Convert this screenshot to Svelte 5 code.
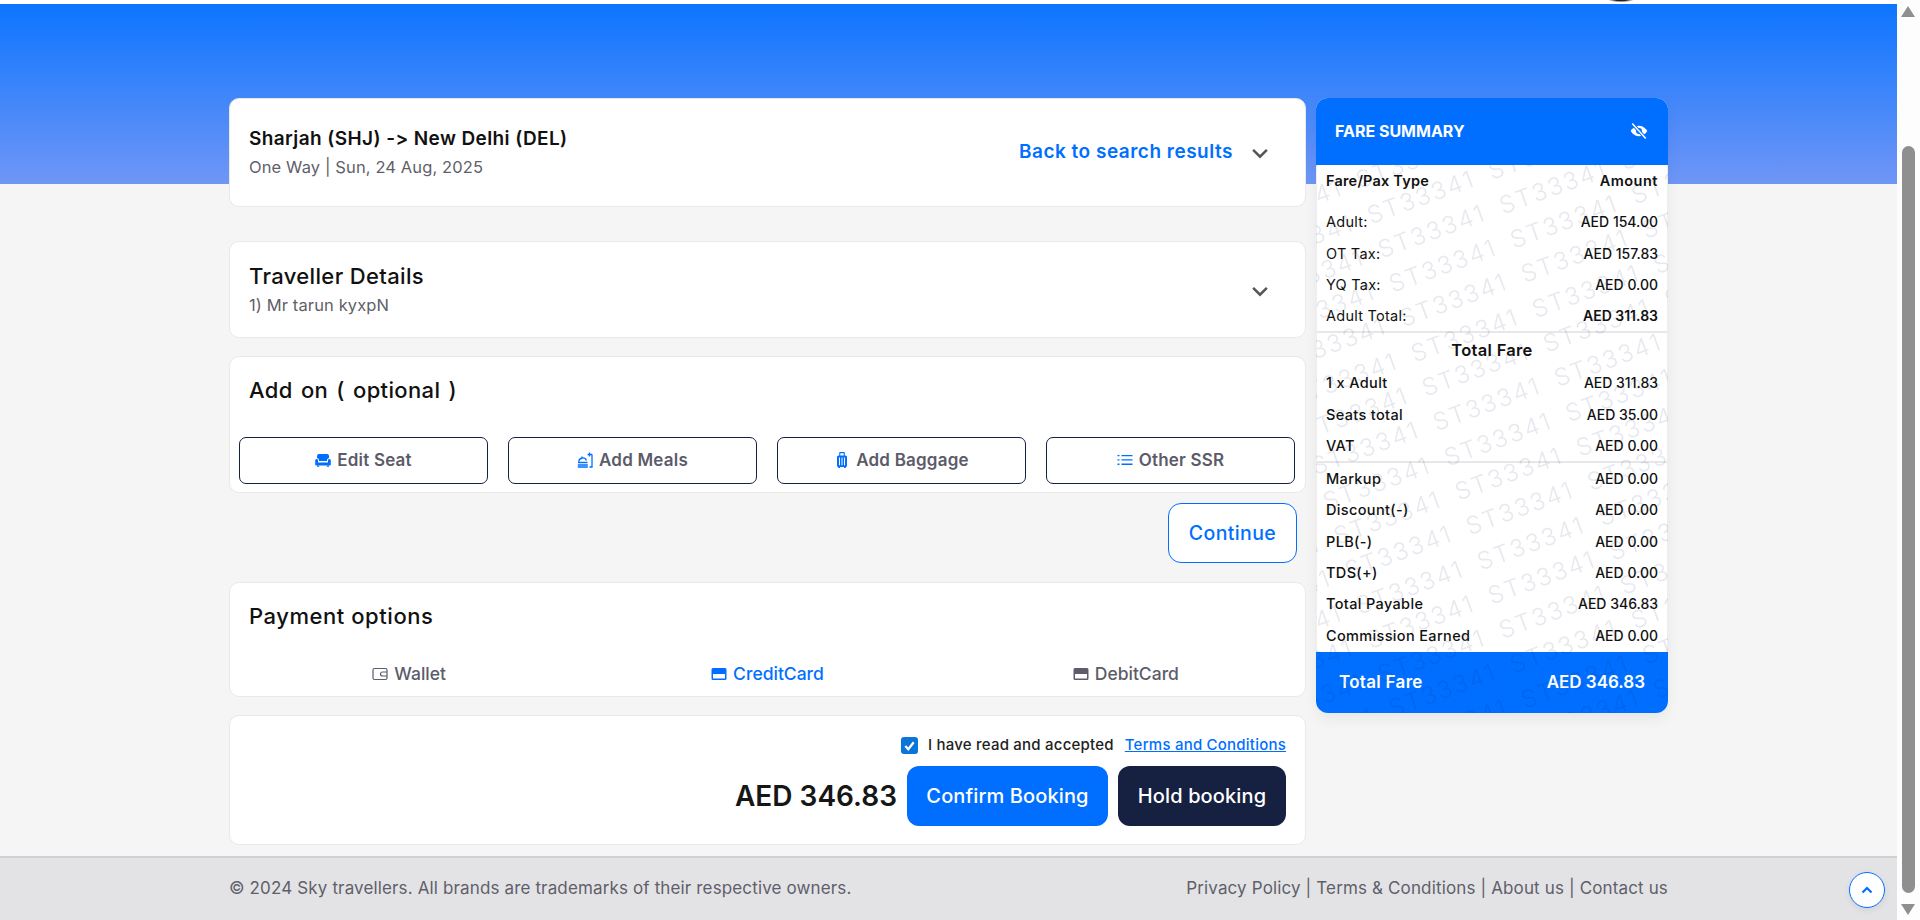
<script lang="ts">
	const addons = [
		{ label: 'Edit Seat', icon: 'seat' },
		{ label: 'Add Meals', icon: 'meals' },
		{ label: 'Add Baggage', icon: 'bag' },
		{ label: 'Other SSR', icon: 'list' }
	];
	const baseRows = [
		{ k: 'Adult:', v: 'AED 154.00' },
		{ k: 'OT Tax:', v: 'AED 157.83' },
		{ k: 'YQ Tax:', v: 'AED 0.00' },
		{ k: 'Adult Total:', v: 'AED 311.83', bold: true }
	];
	const totalRows = [
		{ k: '1 x Adult', v: 'AED 311.83' },
		{ k: 'Seats total', v: 'AED 35.00' },
		{ k: 'VAT', v: 'AED 0.00' }
	];
	const extraRows = [
		{ k: 'Markup', v: 'AED 0.00' },
		{ k: 'Discount(-)', v: 'AED 0.00' },
		{ k: 'PLB(-)', v: 'AED 0.00' },
		{ k: 'TDS(+)', v: 'AED 0.00' },
		{ k: 'Total Payable', v: 'AED 346.83' },
		{ k: 'Commission Earned', v: 'AED 0.00' }
	];
	// watermark lines sit in a rotated block, each one drifts a little to the left
	const marks = Array.from({ length: 20 }, (_, i) => i);
	const words = Array.from({ length: 6 }, (_, i) => i);
</script>

<div class="page">
	<div class="hero"></div>
	<main class="layout">
		<div class="col">
			<section class="card route">
				<div>
					<h1>Sharjah (SHJ) -&gt; New Delhi (DEL)</h1>
					<p>One Way | Sun, 24 Aug, 2025</p>
				</div>
				<div class="route-end">
					<a href="#back">Back to search results</a>
					<svg class="chev" viewBox="0 0 16 16"><path d="M2.5 5.5 8 11l5.5-5.5" /></svg>
				</div>
			</section>

			<section class="card traveller">
				<div>
					<h2>Traveller Details</h2>
					<p>1) Mr tarun kyxpN</p>
				</div>
				<svg class="chev" viewBox="0 0 16 16"><path d="M2.5 5.5 8 11l5.5-5.5" /></svg>
			</section>

			<section class="card addons">
				<h2>Add on ( optional )</h2>
				<div class="addon-grid">
					{#each addons as a}
						<button class="addon">
							{#if a.icon === 'seat'}
								<svg viewBox="0 0 16 16" fill="#006fff"><path d="M4 2h8a2 2 0 0 1 2 2v1.900a2.300 2.300 0 0 0-2 2.200V9H4v-.9a2.300 2.300 0 0 0-2-2.200V4a2 2 0 0 1 2-2Z" /><path d="M.2 8.200a1.800 1.800 0 0 1 2.800-.7V10.500h10V7.500a1.800 1.800 0 0 1 2.800.7V12.500a1 1 0 0 1-1 1H1.200a1 1 0 0 1-1-1Z" /><path d="M2 13.500h2.200v1.200H2zM11.800 13.500H14v1.200h-2.200z" /></svg>
							{:else if a.icon === 'meals'}
								<svg viewBox="0 0 16 16" fill="none" stroke="#006fff" stroke-width="1.300"><path d="M1 10.500h9.500M.8 13h10M.8 15h10M1.800 9.500a4 4 0 0 1 7.700-1M5 5.500v-1M10.500 2.500h4.700M15 2.500v12.500h-2.500M12.500 4.500V.5" /></svg>
							{:else if a.icon === 'bag'}
								<svg viewBox="0 0 16 16" fill="#006fff"><path fill-rule="evenodd" d="M6 0h4a.8.8 0 0 1 .8.8V3.500h.7A1.500 1.500 0 0 1 13 5v8.500a1.500 1.500 0 0 1-1.500 1.500h-7A1.500 1.500 0 0 1 3 13.500V5a1.500 1.500 0 0 1 1.500-1.500h.7V.8A.8.8 0 0 1 6 0Zm.3 1.200v2.300h3.400V1.200ZM5 5.500v7.800h1V5.500Zm2.500 0v7.800h1V5.500Zm2.500 0v7.800h1V5.500Z" /><path d="M4.200 15h1.800v1H4.200zM10 15h1.800v1H10z" /></svg>
							{:else}
								<svg viewBox="0 0 16 16" fill="#006fff"><path d="M4.500 3h11v1.300h-11zM4.500 7.300h11v1.300h-11zM4.500 11.600h11v1.300h-11zM.5 3h2v1.300h-2zM.5 7.300h2v1.300h-2zM.5 11.600h2v1.300h-2z" /></svg>
							{/if}
							{a.label}
						</button>
					{/each}
				</div>
			</section>

			<div class="continue-row"><button class="continue">Continue</button></div>

			<section class="card payment">
				<h2>Payment options</h2>
				<div class="tabs">
					<span class="tab">
						<svg viewBox="0 0 16 16" fill="none" stroke="currentColor" stroke-width="1.200"><rect x="1" y="2.500" width="14" height="11" rx="1.500" /><path d="M15 6H10.500a2 2 0 0 0 0 4H15" /></svg>
						Wallet
					</span>
					<span class="tab active">
						<svg viewBox="0 0 16 16" fill="currentColor"><path fill-rule="evenodd" d="M2 2h12a1.500 1.500 0 0 1 1.500 1.500v9A1.500 1.500 0 0 1 14 14H2a1.500 1.500 0 0 1-1.500-1.500v-9A1.500 1.500 0 0 1 2 2Zm0 6v4.600h12V8Z" /></svg>
						CreditCard
					</span>
					<span class="tab">
						<svg viewBox="0 0 16 16" fill="currentColor"><path fill-rule="evenodd" d="M2 2h12a1.500 1.500 0 0 1 1.500 1.500v9A1.500 1.500 0 0 1 14 14H2a1.500 1.500 0 0 1-1.500-1.500v-9A1.500 1.500 0 0 1 2 2Zm0 6v4.600h12V8Z" /></svg>
						DebitCard
					</span>
				</div>
			</section>

			<section class="card confirm">
				<div class="terms">
					<span class="check">
						<svg viewBox="0 0 16 16"><path d="M3.500 8.500 6.700 12 12.500 4.500" /></svg>
					</span>
					<span>I have read and accepted</span>
					<a href="#terms">Terms and Conditions</a>
				</div>
				<div class="actions">
					<strong>AED 346.83</strong>
					<button class="primary">Confirm Booking</button>
					<button class="dark">Hold booking</button>
				</div>
			</section>
		</div>

		<aside class="fare">
			<div class="fare-head">
				<span>FARE SUMMARY</span>
				<svg viewBox="0 0 24 24"><path fill="#fff" d="M1 12s3.800-7 11-7 11 7 11 7-3.800 7-11 7-11-7-11-7Z" /><circle cx="12" cy="12" r="4" fill="#006fff" /><circle cx="12" cy="12" r="2" fill="#fff" /><path d="M3.500 2.500 20.500 21.500" stroke="#006fff" stroke-width="4.500" /><path d="M3 2 21 22" stroke="#fff" stroke-width="2" /></svg>
			</div>
			<div class="fare-body">
				<div class="row head"><span>Fare/Pax Type</span><span>Amount</span></div>
				<div class="group first">
					{#each baseRows as r}
						<div class="row"><span>{r.k}</span><span class:bold={r.bold}>{r.v}</span></div>
					{/each}
				</div>
				<div class="group sep totals">
					<div class="total-title">Total Fare</div>
					{#each totalRows as r}
						<div class="row strong"><span>{r.k}</span><span>{r.v}</span></div>
					{/each}
				</div>
				<div class="group sep extras">
					{#each extraRows as r}
						<div class="row strong"><span>{r.k}</span><span>{r.v}</span></div>
					{/each}
				</div>
			</div>
			<div class="fare-foot"><span>Total Fare</span><span>AED 346.83</span></div>
			<div class="watermark" aria-hidden="true">
				<div class="mark-block">
					{#each marks as m}
						<div class="mark-line" style:margin-left={`${-116 - m * 1.5}px`}>
							{#each words as w (w)}<span>ST33341</span>{/each}
						</div>
					{/each}
				</div>
			</div>
		</aside>
	</main>

	<footer>
		<span>© 2024 Sky travellers. All brands are trademarks of their respective owners.</span>
		<span>Privacy Policy | Terms &amp; Conditions | About us | Contact us</span>
	</footer>
	<i class="peek"></i>
</div>

<button class="to-top" aria-label="Back to top">
	<svg viewBox="0 0 16 16"><path d="M3.500 10.500 8 6l4.500 4.500" /></svg>
</button>

<div class="scrollbar" aria-hidden="true">
	<i class="arrow up"></i>
	<i class="thumb"></i>
	<i class="arrow down"></i>
</div>

<style>
	:global(body) { margin: 0; overflow: hidden; background: #f5f5f5; color: #111; font-family: Inter, 'Liberation Sans', sans-serif; font-variant-ligatures: none; font-feature-settings: 'calt' 0; }
	button { font-feature-settings: 'calt' 0; }
	.page { position: relative; width: 1897px; height: 920px; padding-top: 4px; box-sizing: border-box; background: #f5f5f5; box-shadow: inset 0 4px 0 #fff; display: flex; flex-direction: column; overflow: hidden; }
	.peek { position: absolute; left: 1609px; top: 0; width: 24px; height: 2px; background: radial-gradient(ellipse at 50% 0, #222 30%, transparent 75%); }
	.hero { height: 180px; flex: none; background: linear-gradient(180deg, #0d75ff, #7096f6); }
	.layout { flex: none; margin: -86px 0 0 229px; width: 1439px; height: 758px; display: grid; grid-template-columns: 1077px 352px; gap: 10px; align-items: start; position: relative; }
	.col { display: flex; flex-direction: column; }
	.card { box-sizing: border-box; background: #fff; border: 1px solid #e9e9ea; border-radius: 10px; }
	h1, h2, p { margin: 0; }
	h1 { font-size: 19px; font-weight: 600; line-height: 26px; letter-spacing: .4px; color: #111; }
	h2 { font-size: 22px; font-weight: 500; line-height: 28px; letter-spacing: .35px; color: #111; }
	p { color: #5f5f6a; font-size: 16.500px; line-height: 24px; letter-spacing: .12px; margin-top: 3px; }
	.route { height: 109px; padding: 0 35px 0 19px; display: flex; align-items: center; justify-content: space-between; }
	.route-end { display: flex; align-items: center; gap: 17px; }
	.route-end a { color: #006fff; font-size: 19px; font-weight: 600; letter-spacing: .5px; text-decoration: none; margin-bottom: 3px; }
	.chev { width: 20px; height: 20px; fill: none; stroke: #555; stroke-width: 2; }
	.traveller { height: 97px; margin-top: 34px; padding: 0 35px 0 19px; display: flex; align-items: center; justify-content: space-between; }
	.traveller .chev { margin-top: 2px; }
	.addons { height: 137px; margin-top: 18px; padding: 19px 10px 0 9px; }
	.addons h2 { padding-left: 10px; word-spacing: 2px; }
	.addon-grid { display: grid; grid-template-columns: repeat(4, 1fr); gap: 20px; margin-top: 33px; }
	.addon { height: 47px; background: #fff; border: 1px solid #162040; border-radius: 7px; color: #5b5b69; font: 600 17px Inter, sans-serif; letter-spacing: .2px; display: flex; align-items: center; justify-content: center; gap: 6px; padding: 0 0 2px; }
	.addon svg { width: 16px; height: 16px; flex: none; }
	.continue-row { display: flex; justify-content: flex-end; padding: 10px 9px 0 0; }
	.continue { width: 129px; height: 60px; background: #fff; border: 1px solid #006fff; border-radius: 13px; color: #006fff; font: 500 19.500px Inter, sans-serif; letter-spacing: .4px; padding: 0; }
	.payment { height: 115px; margin-top: 19px; padding-top: 19px; }
	.payment h2 { padding-left: 19px; letter-spacing: .55px; }
	.tabs { display: grid; grid-template-columns: repeat(3, 1fr); margin-top: 34px; }
	.tab { display: flex; align-items: center; justify-content: center; gap: 6px; color: #5c5c6a; font-size: 17.500px; font-weight: 500; line-height: 20px; }
	.tab svg { width: 16px; height: 16px; }
	.tab.active { color: #006fff; }
	.confirm { height: 130px; margin-top: 18px; padding: 19px 19px 0; display: flex; flex-direction: column; align-items: flex-end; }
	.terms { display: flex; align-items: center; font-size: 15px; font-weight: 500; letter-spacing: .22px; color: #222; line-height: 20px; }
	.terms a { color: #006fff; margin-left: 11px; }
	.check { width: 17px; height: 17px; border-radius: 3px; background: #0b76d8; margin-right: 10px; display: flex; align-items: center; justify-content: center; }
	.check svg { width: 15px; height: 15px; fill: none; stroke: #fff; stroke-width: 2.400; }
	.actions { display: flex; align-items: center; margin-top: 11px; }
	.actions strong { font-size: 28px; font-weight: 600; color: #161616; margin-right: 10px; }
	.actions button { height: 60px; border: 0; border-radius: 12px; color: #fff; font: 500 20px Inter, sans-serif; letter-spacing: .12px; padding: 0; }
	.primary { width: 201px; background: #006fff; }
	.dark { width: 168px; margin-left: 10px; background: #162040; }
	.fare { position: relative; height: 615px; border-radius: 12px; overflow: hidden; box-shadow: 0 6px 14px rgba(0, 0, 0, .06); background: #fff; }
	.fare-head { height: 67px; background: #006fff; color: #fff; font-size: 16px; font-weight: 700; display: flex; align-items: center; justify-content: space-between; padding: 0 20px 2px 19px; box-sizing: border-box; position: relative; z-index: 2; }
	.fare-head svg { width: 18px; height: 18px; }
	.fare-body { height: 487px; box-sizing: border-box; border-inline: 1px solid #eee; position: relative; z-index: 2; font-size: 14px; }
	.row { height: 31.300px; padding: 0 9px; display: flex; align-items: center; justify-content: space-between; color: #111; }
	.row span:first-child { font-size: 14.500px; letter-spacing: .25px; }
	.row span:last-child { font-weight: 500; }
	.row span.bold, .row.head span { font-weight: 600; }
	.row.head span:first-child { letter-spacing: .2px; }
	.row.head span:last-child { font-size: 14.500px; letter-spacing: .5px; }
	.row.strong span:first-child { font-weight: 500; letter-spacing: .35px; }
	.first { margin-top: 10px; }
	.sep { border-top: 2px solid #e7e7e9; }
	.totals .row { height: 31.800px; }
	.extras { margin-top: -1px; }
	.total-title { height: 33px; display: flex; align-items: center; justify-content: center; font-size: 16.500px; font-weight: 600; letter-spacing: .3px; }
	.fare-foot { height: 61px; background: #006fff; color: #fff; font-size: 17px; font-weight: 600; display: flex; align-items: center; justify-content: space-between; padding: 0 23px 2px; position: relative; z-index: 2; box-sizing: border-box; }
	.fare-foot span:first-child { letter-spacing: .3px; }
	.watermark { position: absolute; inset: 67px 0 0 0; z-index: 3; overflow: hidden; pointer-events: none; mix-blend-mode: multiply; }
	.mark-block { position: absolute; left: -100px; top: 40px; margin-top: -28px; width: 800px; transform: rotate(-20deg); transform-origin: 0 28px; }
	.mark-line { display: flex; height: 36.300px; line-height: 36.300px; font-size: 24px; font-weight: 300; letter-spacing: 2.100px; color: #e8e9ef; white-space: nowrap; }
	.mark-line span { flex: none; width: 129px; }
	footer { flex: none; box-sizing: border-box; height: 64px; margin-top: auto; background: #e3e3e6; border-top: 2px solid #cfcfd4; padding: 0 229px 2px; display: flex; align-items: center; justify-content: space-between; color: #5f5f6a; font-size: 17px; letter-spacing: .14px; }
	.to-top { position: fixed; left: 1849px; top: 872px; width: 36px; height: 36px; padding: 0; border-radius: 50%; background: #fff; border: 1px solid #006fff; box-shadow: 0 2px 6px rgba(0, 0, 0, .08); display: flex; align-items: center; justify-content: center; }
	.to-top svg { width: 16px; height: 16px; fill: none; stroke: #006fff; stroke-width: 2.200; }
	.scrollbar { position: fixed; right: 0; top: 0; width: 23px; height: 920px; background: #fdfdfd; }
	.thumb { position: absolute; left: 5px; top: 146px; width: 13px; height: 747px; border-radius: 7px; background: #8f8f8f; }
	.arrow { position: absolute; left: 4px; width: 0; height: 0; border-inline: 7px solid transparent; }
	.up { top: 6px; border-bottom: 11px solid #8f8f8f; }
	.down { bottom: 5px; border-top: 11px solid #8f8f8f; }
</style>
